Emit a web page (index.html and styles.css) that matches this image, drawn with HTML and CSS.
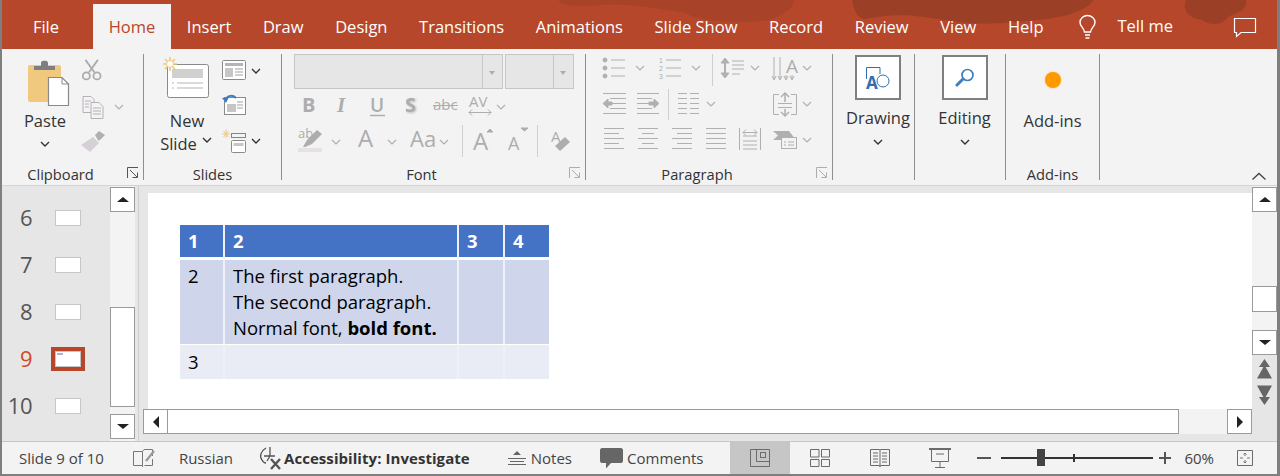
FILE: index.html
```html
<!DOCTYPE html>
<html lang="en">
<head>
<meta charset="utf-8">
<title>PowerPoint</title>
<link rel="stylesheet" href="styles.css">
</head>
<body>
<div class="app">
  <header class="tabbar">
    <svg class="tabbar-art" width="1278" height="49" viewBox="0 0 1278 49">
      <path class="art-soft" d="M556 0C562 7 578 7 600 5C630 3 655 9 683 13C700 23 745 24 768 20C785 14 792 6 792 0Z"/>
      <path d="M850 0C852 10 855 18 862 19C880 17 890 14 912 16C940 18 960 26 1000 23C1040 20 1078 18 1092 0Z"/>
      <path d="M1184 0C1180 10 1186 18 1200 20C1210 27 1222 24 1226 17C1236 12 1246 10 1244 0Z"/>
    </svg>
    <span class="tab tab-file">File</span>
    <span class="tab tab-home">Home</span>
    <span class="tab">Insert</span>
    <span class="tab">Draw</span>
    <span class="tab">Design</span>
    <span class="tab">Transitions</span>
    <span class="tab">Animations</span>
    <span class="tab">Slide Show</span>
    <span class="tab">Record</span>
    <span class="tab">Review</span>
    <span class="tab">View</span>
    <span class="tab">Help</span>
    <svg class="bulb" width="20" height="26" viewBox="0 0 20 26" fill="none" stroke="#fff" stroke-width="1.4"><path d="M6.500 18C6 13.500 2 12.500 2 8.500C2 4.500 5.500 1.500 9.500 1.500C13.500 1.500 17 4.500 17 8.500C17 12.500 13 13.500 12.500 18Z"/><path d="M7 21H12M7.500 24H11.500"/></svg>
    <span class="tell">Tell me</span>
    <svg class="comment" width="24" height="21" viewBox="0 0 24 21" fill="none" stroke="#fff" stroke-width="1.2"><path d="M1.500 1.500H22.500V15.500H8L3.500 19.500V15.500H1.500Z"/></svg>
  </header>

  <section class="ribbon">
    <div class="group g-clip">
      <div class="group-body clip-body">
        <div class="big-btn paste">
          <svg width="44" height="48" viewBox="0 0 44 48"><rect x="0" y="5" width="33" height="37" rx="2" fill="#f0c97f"/><path d="M6 10V6H13V2.500C13 0 20 0 20 2.500V6H27V10Z" fill="#7f7f7f"/><path d="M20.500 17.500H34L40.500 24V45.500H20.500Z" fill="#fff" stroke="#8a8a8a" stroke-width="1.200"/><path d="M34 17.500V24H40.500" fill="none" stroke="#8a8a8a"/></svg>
          <span class="big-label">Paste</span>
          <svg class="chev" width="10" height="6" viewBox="0 0 10 6"><path d="M1 1L5 5L9 1" class="ch-dark"/></svg>
        </div>
        <div class="small-col">
          <svg width="24" height="24" viewBox="0 0 27 27" fill="none" stroke="#ababab" stroke-width="2"><path d="M5 1L15 15M19 1L9 15"/><circle cx="6" cy="19" r="4"/><circle cx="18" cy="19" r="4"/></svg>
          <div class="row-copy">
            <svg width="24" height="24" viewBox="0 0 24 24" fill="#f3f3f3" stroke="#b5b0b5"><path d="M2 1.500H10L13 4.500V17.500H2Z"/><path d="M10 7.500H18L22 11.500V23.500H10Z"/><path d="M4 6H10M4 9H8M4 12H8M12 13H20M12 16H20M12 19H20"/></svg>
            <svg class="chev-side" width="10" height="6" viewBox="0 0 10 6"><path d="M1 1L5 5L9 1" class="ch-light"/></svg>
          </div>
          <svg width="24" height="22" viewBox="0 0 24 22"><path d="M14 4L18 0L24 4L20 8L17.500 10Z" fill="#b0b0b0"/><path d="M0 14L12 6L18 12L9 21Z" fill="#d5d0d5"/></svg>
        </div>
      </div>
      <div class="group-label has-launcher">Clipboard
        <svg class="launcher" width="12" height="12" viewBox="0 0 12 12" fill="none" stroke="#555"><path d="M.5 11V.5H11M3 3L10 10M5.500 10.500H10.500V5.500"/></svg>
      </div>
    </div>

    <div class="group g-slides">
      <div class="group-body slides-body">
        <div class="big-btn newslide">
          <svg width="48" height="46" viewBox="0 0 48 46"><rect x="5.500" y="8.500" width="41" height="33" rx="2" fill="#fff" stroke="#8a8a8a"/><rect x="10" y="13" width="31" height="9" fill="#d0d0d0"/><path d="M10 27H12M15 27H41M10 32H12M15 32H41" stroke="#b5b5b5"/><path d="M8 1V15M1 8H15M3 3L13 13M13 3L3 13" stroke="#f0c97f" stroke-width="1.600"/><circle cx="8" cy="8" r="3.500" fill="#fff" stroke="#f0c97f"/></svg>
          <span class="big-label">New</span>
          <span class="big-label slide-line">Slide<svg class="chev-inline" width="10" height="6" viewBox="0 0 10 6"><path d="M1 1L5 5L9 1" class="ch-dark"/></svg></span>
        </div>
        <div class="small-col slide-tools">
          <div class="tool-row">
            <svg width="26" height="21" viewBox="0 0 26 21"><rect x=".5" y=".5" width="23" height="19" rx="1" fill="#fff" stroke="#8a8a8a"/><rect x="3" y="3" width="18" height="3" fill="#b5b5b5"/><rect x="3" y="8" width="8" height="9" fill="#c6c6c6"/><path d="M13 9H21M13 12H21M13 15H21" stroke="#a0a0a0"/></svg>
            <svg class="chev-side2" width="10" height="6" viewBox="0 0 10 6"><path d="M1 1L5 5L9 1" class="ch-dark"/></svg>
          </div>
          <div class="tool-row">
            <svg width="26" height="22" viewBox="0 0 26 22"><rect x="2.500" y="3.500" width="21" height="17" fill="#fff" stroke="#8a8a8a"/><rect x="5" y="10" width="9" height="8" fill="#c6c6c6"/><path d="M15 8H21M15 11H21M15 14H21" stroke="#a0a0a0"/><path d="M4 5C6 1 11 1 14 4" fill="none" stroke="#3f7fbf" stroke-width="2"/><path d="M0 4L7 3L4 9Z" fill="#3f7fbf"/></svg>
          </div>
          <div class="tool-row">
            <svg width="26" height="24" viewBox="0 0 26 24"><path d="M4 .5V9M0 5H8M1.500 2L6.500 8M6.500 2L1.500 8" stroke="#f0c97f"/><rect x="9.500" y="4.500" width="14" height="4" fill="none" stroke="#e46c0a"/><rect x="9.500" y="11.500" width="14" height="12" rx="1" fill="#fff" stroke="#8a8a8a"/><rect x="11.500" y="14" width="10" height="3" fill="#c6c6c6"/></svg>
            <svg class="chev-side2" width="10" height="6" viewBox="0 0 10 6"><path d="M1 1L5 5L9 1" class="ch-dark"/></svg>
          </div>
        </div>
      </div>
      <div class="group-label">Slides</div>
    </div>

    <div class="group g-font">
      <div class="group-body font-body">
        <div class="combos">
          <div class="combo combo-name"><span class="combo-arrow"></span></div>
          <div class="combo combo-size"><span class="combo-arrow"></span></div>
        </div>
        <div class="fmt-row fr-1">
          <svg width="303" height="28" viewBox="0 0 303 28" class="strip">
            <text x="20" y="21" class="gl gb">B</text>
            <text x="55" y="21" class="gl gi">I</text>
            <text x="88" y="21" class="gl gu">U</text>
            <path d="M88 24.500H103" stroke="#adadad" stroke-width="1.500"/>
            <text x="123" y="21" class="gl gb gs">S</text>
            <text x="151" y="19" class="gl gabc">abc</text>
            <path d="M151 14.500H176" stroke="#adadad"/>
            <text x="187" y="16" class="gl gav">AV</text>
            <path d="M187 21.500H209M190 18.500L187 21.500L190 24.500M206 18.500L209 21.500L206 24.500" fill="none" stroke="#adadad"/>
            <path d="M215 14L219 18L223 14" class="ch-light"/>
          </svg>
        </div>
        <div class="fmt-row fr-2">
          <svg width="303" height="38" viewBox="0 0 303 38" class="strip">
            <text x="16" y="18" class="gl gab">ab</text>
            <path d="M21 27L25 20L35 10L40 14L30 24L23 27Z" fill="#adadad"/>
            <rect x="16" y="28" width="24" height="4" fill="#e5e1e5"/>
            <path d="M50 20L54 24L58 20M106 20L110 24L114 20M158 20L162 24L166 20" class="ch-light"/>
            <text x="76" y="27" class="gl gbigA">A</text>
            <text x="128" y="27" class="gl gaa">Aa</text>
            <path d="M180.500 5V37M255.500 5V37" stroke="#cfcfcf"/>
            <text x="191" y="30" class="gl gbigA">A</text>
            <path d="M205 12L208 9L211 12Z" fill="#adadad" stroke="#adadad"/>
            <text x="226" y="30" class="gl gmidA">A</text>
            <path d="M239 8H246L242.500 11Z" fill="#adadad" stroke="#adadad"/>
            <text x="269" y="22" class="gl gclrA">A</text>
            <path d="M273 26L283 17L288 22L278 31Z" fill="#adadad"/>
          </svg>
        </div>
      </div>
      <div class="group-label has-launcher">Font
        <svg class="launcher" width="12" height="12" viewBox="0 0 12 12" fill="none" stroke="#adadad"><path d="M.5 11V.5H11M3 3L10 10M5.500 10.500H10.500V5.500"/></svg>
      </div>
    </div>

    <div class="group g-para">
      <div class="group-body para-body">
        <svg class="strip" width="246" height="112" viewBox="586 55 246 112" fill="none" stroke="#b0b0b0">
          <g>
            <circle cx="605" cy="61" r="2" fill="#b0b0b0"/><circle cx="605" cy="69" r="2" fill="#b0b0b0"/><circle cx="605" cy="77" r="2" fill="#b0b0b0"/>
            <path d="M611 61H625M611 69H625M611 77H625M666 61H681M666 69H681M666 77H681"/>
            <text x="659" y="64" class="gl gnum">1</text><text x="659" y="72" class="gl gnum">2</text><text x="659" y="80" class="gl gnum">3</text>
            <path d="M636 67L640 71L644 67M692 67L696 71L700 67M751 67L755 71L759 67M803 67L807 71L811 67" class="ch-light"/>
            <path d="M712.500 55V87" stroke="#cfcfcf"/>
            <path d="M725 62V76" stroke-width="2"/><path d="M721 64L725 59L729 64ZM721 74L725 79L729 74Z" fill="#b0b0b0"/>
            <path d="M732 62H744M732 66H744M732 70H744M732 75H740"/>
            <text x="786" y="74" class="gl gta">A</text>
            <path d="M774 58V80M780 58V80M786 76V80M792 76V80M772 77L774 81L776 77M778 77L780 81L782 77M784 77L786 81L788 77M790 77L792 81L794 77"/>
          </g>
          <g>
            <path d="M603 94.500H626M610 99.500H626M610 104.500H626M610 109.500H626M603 114.500H626M637 94.500H659M637 99.500H652M637 104.500H652M637 109.500H652M637 114.500H659"/>
            <path d="M603 104.500L608 100V109ZM608 103H612V106H608Z" fill="#b0b0b0"/>
            <path d="M654 104.500L649 100V109ZM644 103H649V106H644Z" fill="#b0b0b0" transform="translate(5 0)"/>
            <path d="M668.500 90V121" stroke="#cfcfcf"/>
            <path d="M678 94.500H687M690 94.500H699M678 99.500H687M690 99.500H699M678 104.500H687M690 104.500H699M678 109.500H687M690 109.500H699M678 114.500H687M690 114.500H699"/>
            <path d="M707 103L711 107L715 103M803 103L807 107L811 103" class="ch-light"/>
            <path d="M779 95.500H773.500V115.500H779M791 95.500H796.500V115.500H791M778 104.500H792M778 108.500H792"/>
            <path d="M785 94V103M785 110V117M781 98L785 94L789 98M781 113L785 117L789 113" stroke-width="1.500"/>
          </g>
          <g>
            <path d="M604 129.500H624M604 134.500H619M604 139.500H624M604 144.500H619M604 149.500H624"/>
            <path d="M638 129.500H658M642 134.500H654M638 139.500H658M642 144.500H654M638 149.500H658"/>
            <path d="M672 129.500H692M677 134.500H692M672 139.500H692M677 144.500H692M672 149.500H692"/>
            <path d="M706 129.500H726M706 134.500H726M706 139.500H726M706 144.500H726M706 149.500H726"/>
            <path d="M739.500 129V151M760.500 129V151M743 137H757M743 142H757M743 146H757M743 150H757"/>
            <path d="M743 133.500H757M746 130.500L743 133.500L746 136.500M754 130.500L757 133.500L754 136.500"/>
            <path d="M773 132H789L796 141H773L778 136.500Z" fill="#b0b0b0" stroke="none"/>
            <rect x="781.500" y="138.500" width="15" height="11" fill="#f3f3f3"/>
            <path d="M784 143H786M788 143H794M784 146H786M788 146H794"/>
            <path d="M803 139L807 143L811 139" class="ch-light"/>
          </g>
        </svg>
      </div>
      <div class="group-label has-launcher">Paragraph
        <svg class="launcher" width="12" height="12" viewBox="0 0 12 12" fill="none" stroke="#adadad"><path d="M.5 11V.5H11M3 3L10 10M5.500 10.500H10.500V5.500"/></svg>
      </div>
    </div>

    <div class="group g-draw">
      <div class="group-body stack-body">
        <div class="tile"><svg width="26" height="32" viewBox="0 0 26 32" fill="none"><path d="M1.500 17V5.500H15V12" stroke="#2f6fb0"/><circle cx="18" cy="19" r="6" stroke="#2f6fb0"/><text x="1" y="27" class="gl gtile">A</text></svg></div>
        <span class="big-label">Drawing</span>
        <svg class="chev" width="10" height="6" viewBox="0 0 10 6"><path d="M1 1L5 5L9 1" class="ch-dark"/></svg>
      </div>
      <div class="group-label"></div>
    </div>

    <div class="group g-edit">
      <div class="group-body stack-body">
        <div class="tile"><svg width="20" height="20" viewBox="0 0 20 20" fill="none" stroke="#3f7fbf"><circle cx="12.500" cy="7" r="5.500" stroke-width="1.700"/><path d="M8 11L2 17" stroke-width="3" stroke-linecap="round"/></svg></div>
        <span class="big-label">Editing</span>
        <svg class="chev" width="10" height="6" viewBox="0 0 10 6"><path d="M1 1L5 5L9 1" class="ch-dark"/></svg>
      </div>
      <div class="group-label"></div>
    </div>

    <div class="group g-add">
      <div class="group-body stack-body add-body">
        <span class="dot"></span>
        <span class="big-label">Add-ins</span>
      </div>
      <div class="group-label">Add-ins</div>
    </div>

    <svg class="collapse" width="16" height="9" viewBox="0 0 16 9" fill="none" stroke="#444" stroke-width="1.300"><path d="M1.500 7.500L8 1.500L14.500 7.500"/></svg>
  </section>

  <main class="workspace">
    <aside class="thumbs">
      <ol class="thumb-list">
        <li class="thumb"><span class="num">6</span><span class="mini"></span></li>
        <li class="thumb"><span class="num">7</span><span class="mini"></span></li>
        <li class="thumb"><span class="num">8</span><span class="mini"></span></li>
        <li class="thumb current"><span class="num">9</span><span class="mini"><i class="mini-tbl"></i></span></li>
        <li class="thumb"><span class="num">10</span><span class="mini"></span></li>
      </ol>
      <div class="vscroll vs-left">
        <span class="sbtn"><i class="tri up"></i></span>
        <span class="track-top"></span>
        <span class="sthumb"></span>
        <span class="track-gap"></span>
        <span class="sbtn"><i class="tri down"></i></span>
      </div>
    </aside>
    <div class="editor">
      <div class="stage">
        <div class="slide">
          <table class="tbl">
            <colgroup><col class="c1"><col class="c2"><col class="c3"><col class="c4"></colgroup>
            <tr class="hd"><td>1</td><td>2</td><td>3</td><td>4</td></tr>
            <tr class="r2"><td>2</td><td><div>The first paragraph.</div><div>The second paragraph.</div><div>Normal font, <b>bold font.</b></div></td><td></td><td></td></tr>
            <tr class="r3"><td>3</td><td></td><td></td><td></td></tr>
          </table>
        </div>
        <div class="hscroll">
          <span class="sbtn hbtn"><i class="tri left"></i></span>
          <span class="hthumb"></span>
          <span class="htrack"></span>
          <span class="sbtn hbtn"><i class="tri right"></i></span>
        </div>
      </div>
      <div class="vscroll vs-right">
        <span class="sbtn"><i class="tri up"></i></span>
        <span class="rs-top"></span>
        <span class="sthumb rs-thumb"></span>
        <span class="rs-gap"></span>
        <span class="sbtn"><i class="tri down"></i></span>
        <div class="pager">
          <svg width="15" height="20" viewBox="0 0 15 20" fill="#666"><path d="M7.500 0L13 8H2ZM7.500 6L15 19.500H0Z"/></svg>
          <svg width="15" height="20" viewBox="0 0 15 20" fill="#666"><path d="M0 .5H15L7.500 14ZM2 12H13L7.500 20Z"/></svg>
        </div>
      </div>
    </div>
  </main>

  <footer class="status">
    <span class="st st-count">Slide 9 of 10</span>
    <svg class="st-notes" width="23" height="20" viewBox="0 0 23 20" fill="none" stroke="#777"><path d="M10.500 3.500H1.500V17.500H10.500V19M10.500 3.500V17.500M10.500 3.500L12 1.500H20.500V8M12.500 17.500H20.500V11"/><path d="M14 13L22 3" stroke-width="2.200" stroke="#999"/></svg>
    <span class="st st-lang">Russian</span>
    <svg class="st-a11y" width="22" height="24" viewBox="0 0 22 24" fill="none" stroke="#555" stroke-width="1.300"><path d="M7 2C2 5 0 10 3 14C4 16 6 17 7 17M11 1V10M5 10H16M11 10L8 15"/><path d="M12 13L21 23M21 13L12 23" stroke-width="2.400"/></svg>
    <b class="st st-access">Accessibility: Investigate</b>
    <svg class="st-ico-notes" width="18" height="16" viewBox="0 0 18 16" fill="none" stroke="#666"><path d="M0 8.500H18M2 11.500H16M0 14.500H18" /><path d="M9 1L13 5H5Z" fill="#666" stroke="none"/></svg>
    <span class="st st-notetxt">Notes</span>
    <svg class="st-ico-com" width="23" height="21" viewBox="0 0 23 21"><path d="M2 0H21C22 0 23 1 23 2V13C23 14 22 15 21 15H11L6 20.500V15H2C1 15 0 14 0 13V2C0 1 1 0 2 0Z" fill="#666"/></svg>
    <span class="st st-comtxt">Comments</span>
    <span class="view active"><svg width="20" height="18" viewBox="0 0 20 18" fill="none" stroke="#6b6b6b"><path d="M.5.500H19.500V17.500H.5ZM6.500.5V12.500H19.500"/><rect x="10.500" y="3.500" width="5" height="5"/></svg></span>
    <span class="view"><svg width="20" height="18" viewBox="0 0 20 18" fill="none" stroke="#6b6b6b"><path d="M.5.500H9V8H.5ZM11.500.5H19.500V8H11.500ZM.5 10.500H9V17.500H.5ZM11.500 10.500H19.500V17.500H11.500Z"/></svg></span>
    <span class="view"><svg width="20" height="19" viewBox="0 0 20 19" fill="none" stroke="#6b6b6b"><path d="M.5.500H9.500L10 1.500L10.500.5H19.500V16.500H10.500L10 18L9.500 16.500H.5ZM10 1.500V16.500M3 4H8M3 7H8M3 10H8M3 13H8M12 4H17M12 7H17M12 10H17M12 13H17"/></svg></span>
    <span class="view"><svg width="22" height="20" viewBox="0 0 22 20" fill="none" stroke="#6b6b6b"><path d="M0 1H22" stroke-width="2"/><path d="M2.500 1V13.500H19.500V1M11 13.500V19.500M6 19.500H16M7 6H15"/></svg></span>
    <span class="zoom-minus"></span>
    <span class="slider"><i class="tick"></i><i class="knob"></i></span>
    <span class="zoom-plus"></span>
    <span class="st st-pct">60%</span>
    <svg class="st-fit" width="16" height="16" viewBox="0 0 16 16" fill="none" stroke="#6b6b6b"><path d="M.5.500H15.500V15.500H.5Z"/><path d="M8 3V6M6.500 4.500L8 3L9.500 4.500M8 10V13M6.500 11.500L8 13L9.500 11.500M3 8H6M10 8H13" stroke-width=".9"/></svg>
  </footer>
</div>
</body>
</html>
```

FILE: styles.css
```css
* { box-sizing: border-box; }
html, body { margin: 0; padding: 0; }
body { width: 1280px; height: 476px; overflow: hidden; font-family: "Open Sans", "Noto Sans", sans-serif; }
.app { width: 1280px; height: 476px; display: flex; flex-direction: column; border-left: 2px solid #7f7f7f; border-right: 3px solid #7f7f7f; border-bottom: 2px solid #7f7f7f; background: #e6e6e6; }

/* tab bar */
.tabbar { height: 49px; flex: none; background: #b7472a; display: flex; align-items: flex-end; position: relative; color: #fff; font-size: 16.500px; }
.tabbar-art { position: absolute; left: 0; top: 0; fill: #9c3f27; }
.art-soft { fill: #a8432a; }
.tab { position: relative; padding: 0 15.800px; height: 45px; line-height: 46px; white-space: nowrap; }
.tab-file { width: 91px; padding: 0 3px 0 0; text-align: center; }
.tab-home { width: 78px; padding: 0; text-align: center; background: #f3f3f3; color: #b7472a; }
.bulb { position: relative; margin: 0 0 9px 19px; }
.tell { position: relative; margin-left: 19px; height: 47px; line-height: 47px; }
.comment { position: absolute; left: 1231px; top: 17px; }

/* ribbon */
.ribbon { height: 137px; flex: none; background: #f3f3f3; display: flex; padding: 5px 0 6px; position: relative; border-bottom: 1px solid #d4d4d4; }
.group { flex: none; height: 126px; border-right: 1px solid #8e8e8e; display: flex; flex-direction: column; color: #333; }
.group-body { height: 104px; flex: none; }
.group-label { height: 22px; line-height: 32px; font-size: 14.700px; text-align: center; position: relative; color: #333; }
.has-launcher { padding-right: 24px; }
.launcher { position: absolute; right: 4px; top: 9px; }
.g-clip { width: 142px; }
.g-slides { width: 138px; }
.g-font { width: 304px; }
.g-para { width: 247px; }
.g-draw { width: 82px; }
.g-edit { width: 91px; }
.g-add { width: 94px; }
.big-label { display: block; font-size: 16.500px; line-height: 23px; color: #333; text-align: center; white-space: nowrap; }
.big-btn { display: flex; flex-direction: column; align-items: center; }
.chev { display: block; }
.ch-dark { fill: none; stroke: #333; stroke-width: 1.4; }
.ch-light { fill: none; stroke: #b0b0b0; stroke-width: 1.2; }

.clip-body { display: flex; }
.paste { width: 54px; margin-left: 16px; padding-top: 6px; }
.paste svg:first-child { margin-left: 10px; }
.paste .big-label { margin-top: 1px; }
.paste .chev { margin-top: 9px; }
.small-col { display: flex; flex-direction: column; }
.clip-body .small-col { margin: 0 0 0 9px; padding-top: 5px; gap: 12px; }
.row-copy { display: flex; align-items: center; }
.chev-side { margin-left: 9px; }

.slides-body { display: flex; }
.newslide { width: 56px; margin-left: 15px; padding-top: 2px; }
.newslide svg:first-child { margin-bottom: 7px; margin-right: 2px; }
.slide-line { display: flex; align-items: center; }
.chev-inline { margin-left: 5px; }
.slide-tools { margin-left: 7px; padding-top: 6px; gap: 13px; }
.tool-row { display: flex; align-items: center; }
.chev-side2 { margin-left: 3px; }

.font-body { padding: 0; }
.combos { display: flex; gap: 2px; padding-left: 12px; }
.combo { height: 35px; background: #e6e6e6; border: 1px solid #c6c6c6; display: flex; justify-content: flex-end; }
.combo-name { width: 209px; }
.combo-size { width: 69px; }
.combo-arrow { width: 20px; border-left: 1px solid #c6c6c6; position: relative; }
.combo-arrow::after { content: ""; position: absolute; left: 6px; top: 16px; border: 3.500px solid transparent; border-top: 4px solid #adadad; border-bottom: 0; }
.strip { display: block; }
.fr-1 { margin-top: 2px; }
.fr-2 { margin-top: 1px; }
.gl { font-family: "Open Sans", sans-serif; fill: #adadad; stroke: none; }
.gb { font-size: 20px; font-weight: 700; }
.gi { font-size: 21px; font-style: italic; font-weight: 700; font-family: "Liberation Serif", serif; }
.gu { font-size: 19px; font-weight: 600; }
.gs { filter: drop-shadow(1px 1px 1px #bbb); }
.gabc { font-size: 15px; }
.gav { font-size: 15px; }
.gab { font-size: 13px; }
.gbigA { font-size: 24px; }
.gaa { font-size: 22px; }
.gmidA { font-size: 18px; }
.gclrA { font-size: 15px; }
.gnum { font-size: 6.900px; font-family: "Liberation Sans", sans-serif; }
.gta { font-size: 19px; }
.gtile { font-size: 17px; font-weight: 700; fill: #2f6fb0; }

.stack-body { display: flex; flex-direction: column; align-items: center; }
.stack-body .chev { margin-top: 9px; }
.tile { width: 46px; height: 45px; background: #fff; border: 2.500px solid #7f7f7f; display: flex; align-items: center; justify-content: center; margin-bottom: 6px; }
.g-draw .stack-body { padding: 1px 0 0 9px; }
.g-edit .stack-body { padding: 1px 0 0 9px; }
.g-draw .big-label, .g-edit .big-label { line-height: 24px; }
.add-body { padding-top: 18px; }
.dot { width: 16px; height: 16px; border-radius: 50%; background: #ff9a00; box-shadow: 0 0 2px #ffc76b; margin-bottom: 21px; }
.collapse { position: absolute; left: 1249px; top: 123px; }

/* workspace */
.workspace { flex: 1; display: flex; min-height: 0; background: #e6e6e6; }
.thumbs { width: 133px; flex: none; display: flex; }
.thumb-list { list-style: none; margin: 0; padding: 8px 0 0; width: 108px; flex: none; }
.thumb { height: 47px; display: flex; align-items: center; }
.num { width: 30px; text-align: right; font-size: 22px; line-height: 47px; color: #555; letter-spacing: -.5px; }
.mini { width: 26px; height: 16px; margin-left: 23px; background: #fff; border: 1px solid #c6c6c6; position: relative; }
.current .num { color: #d24726; }
.current .mini { outline: 4px solid #b7472a; outline-offset: 0; }
.mini-tbl { position: absolute; left: 1px; top: 1px; width: 6px; height: 2px; background: #aab4dc; }
.vscroll { width: 25px; flex: none; display: flex; flex-direction: column; background: #f3f3f3; padding-top: 1px; }
.sbtn { flex: none; width: 25px; height: 25px; background: #fff; border: 1px solid #9a9a9a; display: flex; align-items: center; justify-content: center; }
.tri { display: block; width: 0; height: 0; border: 5px solid transparent; }
.tri.up { border-top: 0; border-bottom: 5px solid #222; border-left-width: 6px; border-right-width: 6px; }
.tri.down { border-bottom: 0; border-top: 5px solid #222; border-left-width: 6px; border-right-width: 6px; }
.tri.left { border-left: 0; border-right: 6px solid #222; border-top-width: 6px; border-bottom-width: 6px; }
.tri.right { border-right: 0; border-left: 6px solid #222; border-top-width: 6px; border-bottom-width: 6px; }
.track-top { height: 95px; }
.sthumb { flex: none; height: 100px; background: #fff; border: 1px solid #9a9a9a; }
.track-gap { height: 7px; }

.editor { flex: 1; display: flex; min-width: 0; border-left: 1px solid #cfcfcf; margin-left: 3px; padding-left: 1px; }
.stage { flex: 1; min-width: 0; padding: 7px 0 0 8px; }
.slide { height: 216px; background: #fff; padding: 32px 0 0 32px; }
.tbl { border-collapse: separate; border-spacing: 0; table-layout: fixed; width: 369px; height: 154px; font-size: 18.500px; color: #000; font-family: "Open Sans", "Noto Sans", sans-serif; }
.c1 { width: 45px; }
.c2 { width: 234px; }
.c3 { width: 46px; }
.c4 { width: 44px; }
.tbl td { padding: 0 0 0 8px; vertical-align: top; border-right: 2px solid #eef1f9; border-bottom: 1px solid #fff; line-height: 26px; }
.tbl td:last-child { border-right: 0; }
.hd td { height: 35px; background: #4472c4; color: #fff; font-weight: 700; border-bottom-width: 3px; padding-top: 3px; }
.r2 td { height: 85px; background: #cfd5ea; padding-top: 3px; }
.r3 td { height: 34px; background: #e9ebf5; padding-top: 4px; border-bottom: 0; }
.hscroll { margin: 0 0 0 -5px; height: 25px; display: flex; background: #f3f3f3; }
.hbtn { width: 25px; }
.hthumb { flex: none; width: 1011px; background: #fff; border: 1px solid #9a9a9a; border-left: 0; }
.htrack { flex: 1; }
.vs-right { background: #f3f3f3; height: 253px; }
.rs-top { height: 74px; }
.rs-thumb { height: 26px; }
.rs-gap { height: 18px; }
.pager { flex: 1; background: #e6e6e6; display: flex; flex-direction: column; align-items: center; gap: 6px; padding-top: 4px; }

/* status bar */
.status { height: 33px; flex: none; background: #f3f3f3; border-top: 1px solid #c6c6c6; display: flex; align-items: center; position: relative; font-size: 15px; color: #444; }
.st { white-space: nowrap; }
.st-count { margin-left: 17px; }
.st-notes { margin-left: 28px; }
.st-lang { margin-left: 24px; }
.st-a11y { margin-left: 26px; }
.st-access { margin-left: 3px; color: #333; letter-spacing: .06px; }
.st-ico-notes { margin-left: 38px; }
.st-notetxt { margin-left: 5px; }
.st-ico-com { margin-left: 28px; }
.st-comtxt { margin-left: 4px; }
.view { flex: none; width: 60px; height: 32px; display: flex; align-items: center; justify-content: center; }
.view.active { background: #c6c6c6; margin-left: 27px; }
.zoom-minus { width: 14px; height: 2px; background: #555; margin-left: 7px; flex: none; }
.slider { width: 152px; height: 2px; margin-left: 10px; background: #333; position: relative; flex: none; }
.tick { position: absolute; left: 72px; top: -3px; width: 2px; height: 8px; background: #333; }
.knob { position: absolute; left: 36px; top: -8px; width: 8px; height: 17px; background: #444; }
.zoom-plus { width: 12px; height: 12px; margin-left: 6px; flex: none; background: linear-gradient(#555,#555) center/12px 2px no-repeat, linear-gradient(#555,#555) center/2px 12px no-repeat; }
.st-pct { margin-left: 13px; }
.st-fit { margin-left: 23px; }
```
